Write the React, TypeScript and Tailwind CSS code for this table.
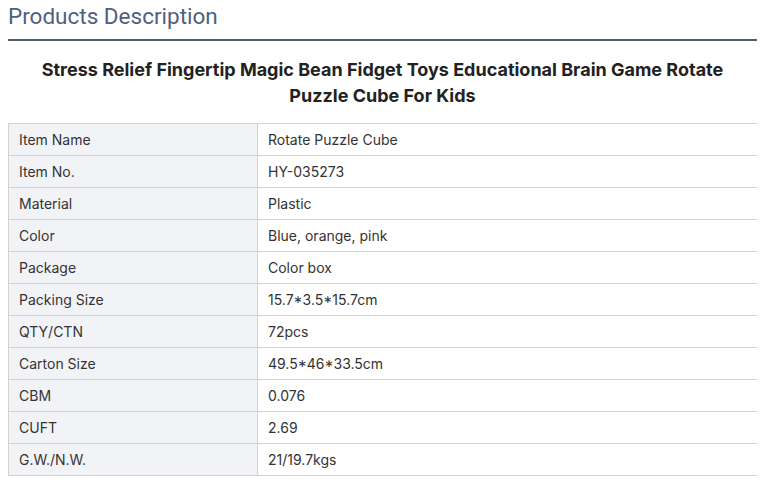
const rows: [string, string][] = [
  ["Item Name", "Rotate Puzzle Cube"],
  ["Item No.", "HY-035273"],
  ["Material", "Plastic"],
  ["Color", "Blue, orange, pink"],
  ["Package", "Color box"],
  ["Packing Size", "15.7*3.5*15.7cm"],
  ["QTY/CTN", "72pcs"],
  ["Carton Size", "49.5*46*33.5cm"],
  ["CBM", "0.076"],
  ["CUFT", "2.69"],
  ["G.W./N.W.", "21/19.7kgs"],
];

export default function App() {
  return (
    <div className="h-[485px] w-[770px] bg-white pl-2 font-['Inter',sans-serif] text-[#333]">
      <div className="w-[749px]">
        <h2 className="h-[41px] border-b-2 border-[#4f5d73] pt-[1px] font-['Roboto',sans-serif] text-[22.5px] leading-[30px] text-[#4f6080]">
          Products Description
        </h2>
        <p className="mt-[16px] px-6 text-center text-[18px] font-bold leading-[26px] text-[#222]">
          Stress Relief Fingertip Magic Bean Fidget Toys Educational Brain Game Rotate Puzzle Cube For Kids
        </p>
        <table className="mt-[14px] w-full border-collapse text-[14px]">
          <tbody>
            {rows.map(([k, v]) => (
              <tr key={k} className="h-[32px]">
                <td className="w-[249px] border border-[#d2d2d2] bg-[#f2f3f7] pl-[10px] align-middle">
                  {k}
                </td>
                <td className="border-y border-l border-[#d2d2d2] pl-[10px] align-middle">
                  {v}
                </td>
              </tr>
            ))}
          </tbody>
        </table>
      </div>
    </div>
  );
}
